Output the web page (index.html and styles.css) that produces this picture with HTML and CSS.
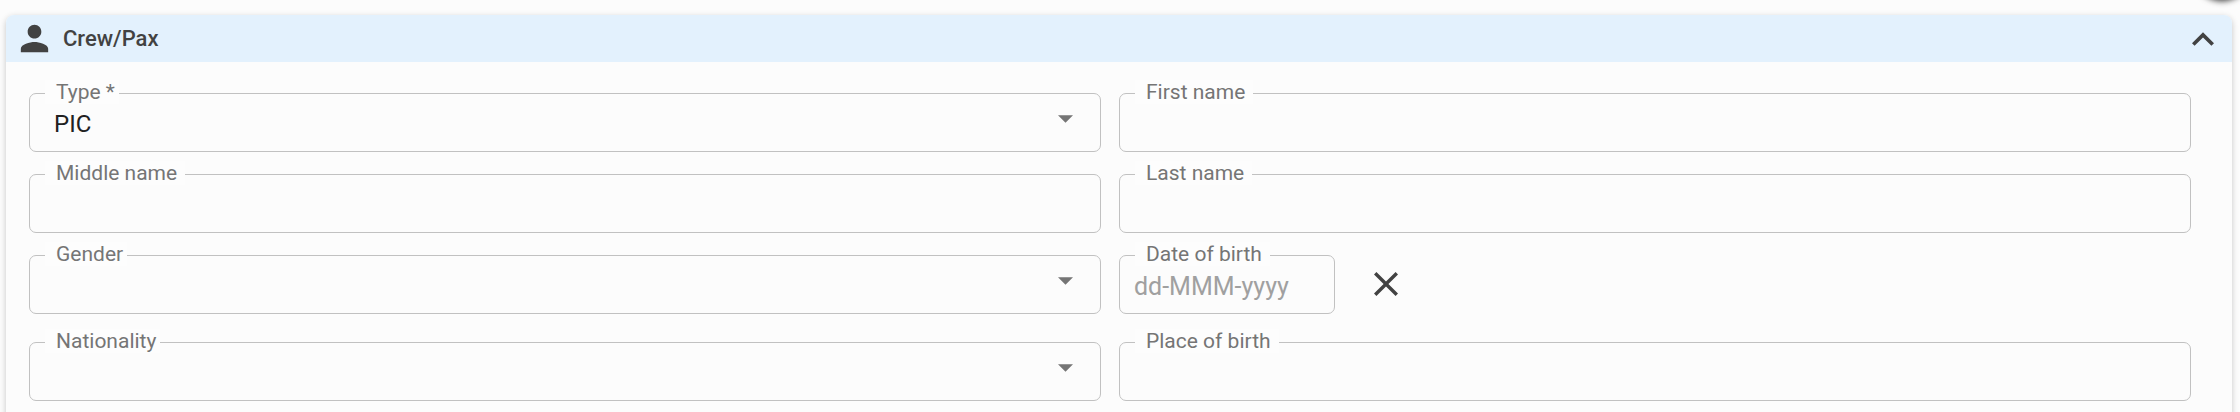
FILE: index.html
```
<!DOCTYPE html>
<html lang="en">
<head>
  <meta charset="UTF-8" />
  <meta name="viewport" content="width=device-width, initial-scale=1.0"/>
  <title>Crew/Pax</title>
  <link rel="stylesheet" href="styles.css">
</head>
<body>
  <button class="fab" type="button" aria-label="Add"></button>

  <section class="panel">
    <!-- Panel header -->
    <header class="panel-header">
      <svg class="person-icon" viewBox="0 0 24 24"><path d="M12 12c2.21 0 4-1.79 4-4s-1.79-4-4-4-4 1.79-4 4 1.79 4 4 4zm0 2c-2.67 0-8 1.34-8 4v2h16v-2c0-2.66-5.33-4-8-4z"/></svg>
      <h2 class="panel-title">Crew/Pax</h2>
      <button class="icon-btn toggle-btn" type="button" aria-label="Collapse">
        <svg class="chevron-icon" viewBox="6 8 12 7.41"><path d="M12 8l-6 6 1.41 1.41L12 10.83l4.59 4.58L18 14z"/></svg>
      </button>
    </header>

    <!-- Crew form -->
    <form class="form">
      <div class="row">
        <div class="field field-select">
          <label for="type">Type *</label>
          <select id="type">
            <option>PIC</option>
            <option>SIC</option>
          </select>
          <svg class="arrow" viewBox="0 0 10 5"><path d="M0 0h10L5 5z"/></svg>
        </div>
        <div class="field">
          <label for="firstName">First name</label>
          <input id="firstName" type="text" />
        </div>
      </div>

      <div class="row">
        <div class="field">
          <label for="middleName">Middle name</label>
          <input id="middleName" type="text" />
        </div>
        <div class="field">
          <label for="lastName">Last name</label>
          <input id="lastName" type="text" />
        </div>
      </div>

      <div class="row row-date">
        <div class="field field-select">
          <label for="gender">Gender</label>
          <select id="gender">
            <option></option>
            <option>Female</option>
            <option>Male</option>
          </select>
          <svg class="arrow" viewBox="0 0 10 5"><path d="M0 0h10L5 5z"/></svg>
        </div>
        <div class="date-group">
          <div class="field field-date">
            <label for="birthDate">Date of birth</label>
            <input id="birthDate" type="text" placeholder="dd-MMM-yyyy" />
          </div>
          <button class="icon-btn clear-btn" type="button" aria-label="Clear date">
            <svg class="clear-icon" viewBox="5 5 14 14"><path d="M19 6.41L17.59 5 12 10.59 6.41 5 5 6.41 10.59 12 5 17.59 6.41 19 12 13.41 17.59 19 19 17.59 13.41 12z"/></svg>
          </button>
        </div>
      </div>

      <div class="row">
        <div class="field field-select">
          <label for="nationality">Nationality</label>
          <select id="nationality">
            <option></option>
          </select>
          <svg class="arrow" viewBox="0 0 10 5"><path d="M0 0h10L5 5z"/></svg>
        </div>
        <div class="field">
          <label for="birthPlace">Place of birth</label>
          <input id="birthPlace" type="text" />
        </div>
      </div>
    </form>
  </section>
</body>
</html>
```
FILE: styles.css
```
* {
  box-sizing: border-box;
}

body {
  margin: 0;
  height: 100vh;
  overflow: hidden;
  padding: 15px 8px 0 6px;
  font-family: Roboto, sans-serif;
  background-color: #fcfcfc;
  color: #424242;
}

.fab {
  position: absolute;
  top: -57px;
  right: -10px;
  width: 56px;
  height: 56px;
  padding: 0;
  border: none;
  border-radius: 50%;
  background-color: #fcfcfc;
  box-shadow: 0 2px 6px rgba(0, 0, 0, 0.8);
}

.panel {
  border-radius: 8px;
  background-color: #fcfcfc;
  box-shadow: 0 2px 6px rgba(0, 0, 0, 0.22);
}

.panel-header {
  display: flex;
  align-items: center;
  height: 47px;
  padding: 0 18px 0 8px;
  border-radius: 8px 8px 0 0;
  background-color: #e3f1fd;
}

.panel-title {
  flex: 1;
  margin: 0 0 0 8px;
  font-size: 22px;
  line-height: 28px;
  font-weight: 500;
}

.person-icon {
  width: 41px;
  height: 41px;
  fill: #424242;
}

.icon-btn {
  display: flex;
  align-items: center;
  padding: 0;
  border: none;
  background: none;
  cursor: pointer;
}

.icon-btn svg {
  fill: #424242;
}

.chevron-icon {
  width: 22px;
  height: 14px;
}

.clear-btn {
  padding-bottom: 2px;
}

.clear-icon {
  width: 24px;
  height: 24px;
}

.form {
  display: flex;
  flex-direction: column;
  gap: 22px;
  padding: 31px 41px 24px 23px;
}

.row {
  display: grid;
  grid-template-columns: 1fr 1fr;
  gap: 18px;
}

.row-date {
  padding-bottom: 6px;
}

.field {
  position: relative;
  height: 59px;
  border: 1px solid #c1c1c1;
  border-radius: 7px;
}

/* label sits over the top border */
.field label {
  position: absolute;
  top: -14px;
  left: 15px;
  padding: 0 8px 0 11px;
  font-size: 21px;
  line-height: 24px;
  background-color: #fdfdfd;
  color: #757575;
  white-space: nowrap;
}

.field-select label {
  padding-right: 4px;
}

.field input,
.field select {
  display: block;
  width: 100%;
  height: 100%;
  margin: 0;
  padding: 3px 15px 0 24px;
  border: none;
  outline: none;
  appearance: none;
  background: none;
  font-family: inherit;
  font-size: 24px;
  color: #212121;
}

.arrow {
  position: absolute;
  top: 21px;
  right: 27px;
  width: 15px;
  height: 8px;
  fill: #757575;
  pointer-events: none;
}

.date-group {
  display: flex;
  gap: 39px;
}

.field-date {
  width: 216px;
}

.field-date input {
  padding-left: 14px;
  font-size: 25px;
}

.field-date input::placeholder {
  color: #a0a0a0;
  opacity: 1;
}

@media screen and (max-width: 600px) {
  .row {
    grid-template-columns: 1fr;
  }
}
```
